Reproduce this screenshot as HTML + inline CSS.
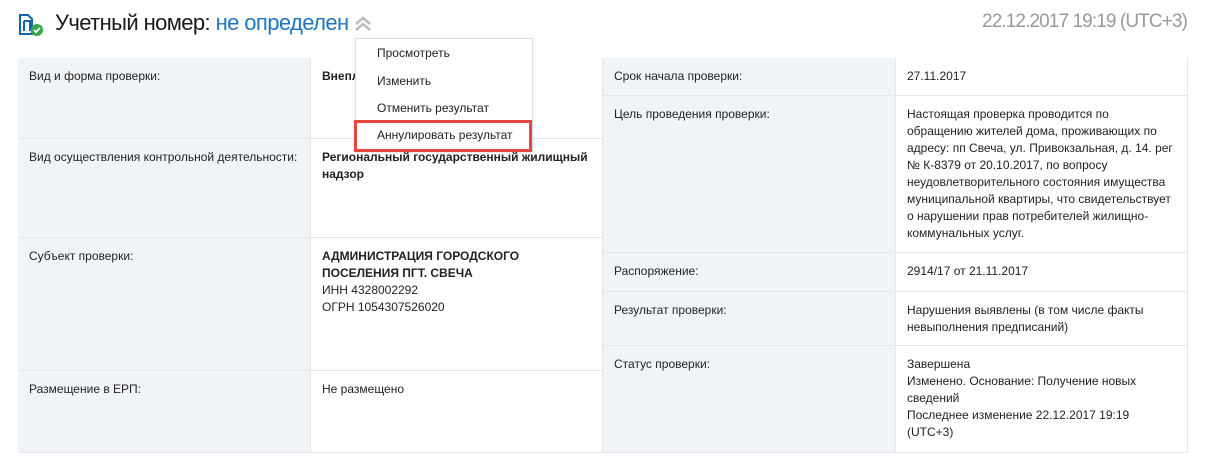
<!DOCTYPE html>
<html><head><meta charset="utf-8"><style>
*{margin:0;padding:0;box-sizing:border-box}
body{width:1208px;height:473px;background:#fff;font-family:"Liberation Sans",Arial,sans-serif;font-size:12px;color:#222;position:relative;overflow:hidden}
.a{position:absolute}
.c{position:absolute;padding:10px 11px;line-height:17px;border-right:1px solid #e3e7eb;border-bottom:1px solid #e3e7eb}
.l{background:#f1f4f7}
.v{background:#fff}
b{font-weight:bold}
.dd{position:absolute;left:355px;top:38px;width:178px;height:114px;background:#fff;border:1px solid #dde1e5;box-shadow:0 1px 3px rgba(0,0,0,.12)}
.dd div{position:absolute;left:21px;font-size:12px;color:#222}
</style></head><body>
<svg class="a" style="left:17px;top:13px" width="28" height="24" viewBox="0 0 28 24">
<path d="M3 2h8l4 4v15H3z" fill="none" stroke="#1565a8" stroke-width="2"/>
<path d="M7 8h6v10M7 8v10" fill="none" stroke="#1565a8" stroke-width="2"/>
<circle cx="20" cy="17" r="6" fill="#3aa54a"/>
<path d="M17 17l2 2 4-4" fill="none" stroke="#fff" stroke-width="1.8"/>
</svg>
<div class="a" style="left:55px;top:10px;font-size:22px;color:#1a1a1a;letter-spacing:-0.6px;white-space:nowrap">Учетный номер: <span style="color:#1f76c0">не определен</span></div>
<svg class="a" style="left:354px;top:15px" width="18" height="18" viewBox="0 0 18 18"><path d="M2 9l7-6 7 6M2 15l7-6 7 6" fill="none" stroke="#bbb" stroke-width="2.5"/></svg>
<div class="a" style="right:21px;top:11px;font-size:19px;color:#999;letter-spacing:-0.9px;white-space:nowrap">22.12.2017 19:19 (UTC+3)</div>

<div class="a" style="left:18px;top:58px;width:1170px;height:395px;border-top:1px solid #e3e7eb;border-left:1px solid #e3e7eb"></div>
<div class="c l" style="left:18px;top:58px;width:293px;height:81px">Вид и форма проверки:</div>
<div class="c v" style="left:311px;top:58px;width:292px;height:81px"><b>Внеплановая выездная</b></div>
<div class="c l" style="left:18px;top:139px;width:293px;height:99px">Вид осуществления контрольной деятельности:</div>
<div class="c v" style="left:311px;top:139px;width:292px;height:99px"><b>Региональный государственный жилищный надзор</b></div>
<div class="c l" style="left:18px;top:238px;width:293px;height:133px">Субъект проверки:</div>
<div class="c v" style="left:311px;top:238px;width:292px;height:133px"><b>АДМИНИСТРАЦИЯ ГОРОДСКОГО ПОСЕЛЕНИЯ ПГТ. СВЕЧА</b><br>ИНН 4328002292<br>ОГРН 1054307526020</div>
<div class="c l" style="left:18px;top:371px;width:293px;height:82px">Размещение в ЕРП:</div>
<div class="c v" style="left:311px;top:371px;width:292px;height:82px">Не размещено</div>

<div class="c l" style="left:603px;top:58px;width:293px;height:38px">Срок начала проверки:</div>
<div class="c v" style="left:896px;top:58px;width:292px;height:38px">27.11.2017</div>
<div class="c l" style="left:603px;top:96px;width:293px;height:157px">Цель проведения проверки:</div>
<div class="c v" style="left:896px;top:96px;width:292px;height:157px">Настоящая проверка проводится по обращению жителей дома, проживающих по адресу: пп Свеча, ул. Привокзальная, д. 14. рег № К-8379 от 20.10.2017, по вопросу неудовлетворительного состояния имущества муниципальной квартиры, что свидетельствует о нарушении прав потребителей жилищно-коммунальных услуг.</div>
<div class="c l" style="left:603px;top:253px;width:293px;height:39px">Распоряжение:</div>
<div class="c v" style="left:896px;top:253px;width:292px;height:39px">2914/17 от 21.11.2017</div>
<div class="c l" style="left:603px;top:292px;width:293px;height:54px">Результат проверки:</div>
<div class="c v" style="left:896px;top:292px;width:292px;height:54px">Нарушения выявлены (в том числе факты невыполнения предписаний)</div>
<div class="c l" style="left:603px;top:346px;width:293px;height:107px">Статус проверки:</div>
<div class="c v" style="left:896px;top:346px;width:292px;height:107px">Завершена<br>Изменено. Основание: Получение новых сведений<br>Последнее изменение 22.12.2017 19:19 (UTC+3)</div>

<div class="dd">
<div style="top:7px">Просмотреть</div>
<div style="top:35px">Изменить</div>
<div style="top:62px">Отменить результат</div>
<div style="top:89px">Аннулировать результат</div>
</div>
<div class="a" style="left:354px;top:120px;width:178px;height:32px;border:3px solid #e5463f"></div>
</body></html>
